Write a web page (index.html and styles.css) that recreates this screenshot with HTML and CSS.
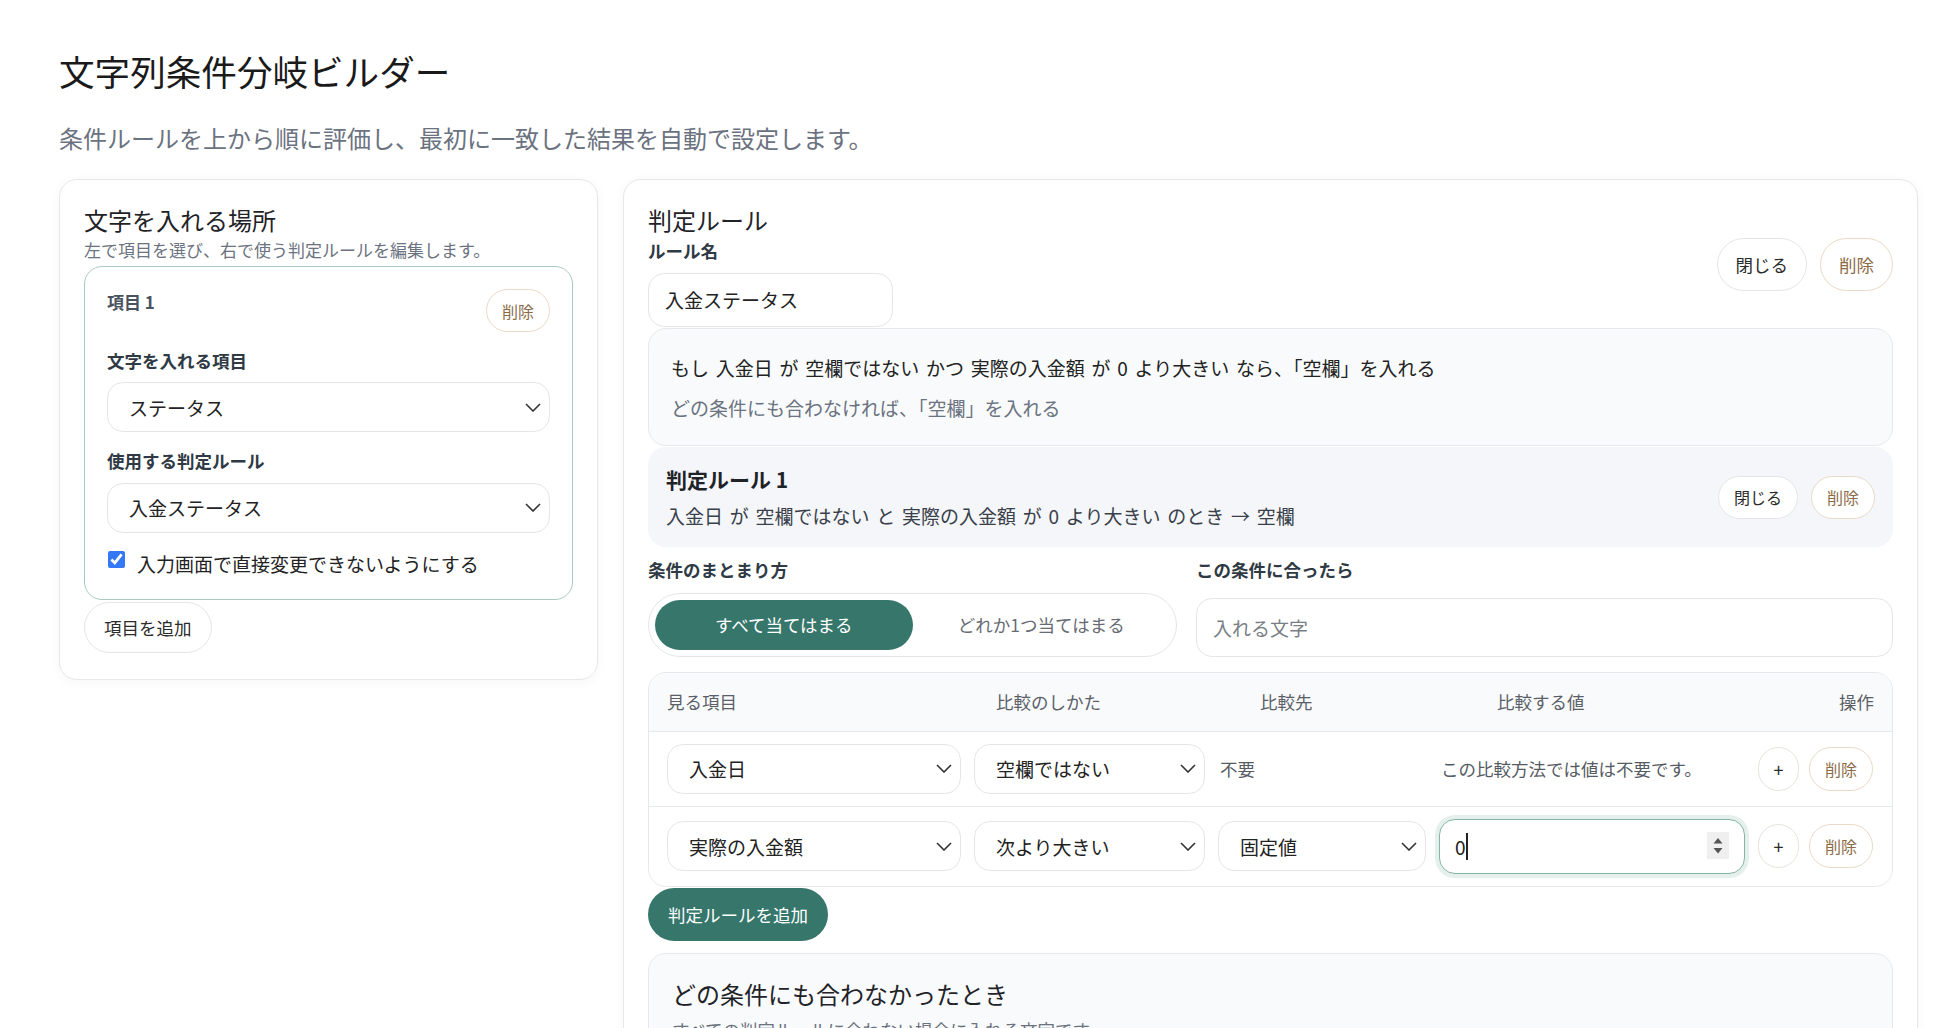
FILE: index.html
```html
<!DOCTYPE html>
<html lang="ja">
<head>
    <meta charset="UTF-8">
    <meta name="viewport" content="width=device-width, initial-scale=1.0">
    <title>文字列条件分岐ビルダー</title>
    <link rel="stylesheet" href="styles.css">
</head>
<body>
<div class="page">
    <h1>文字列条件分岐ビルダー</h1>
    <p class="lead">条件ルールを上から順に評価し、最初に一致した結果を自動で設定します。</p>

    <div class="layout">
        <!-- 左: 文字を入れる場所 -->
        <section class="card">
            <h2>文字を入れる場所</h2>
            <p class="hint">左で項目を選び、右で使う判定ルールを編集します。</p>

            <div class="target">
                <div class="target-head">
                    <span class="target-name">項目 1</span>
                    <button class="btn btn-sm btn-danger">削除</button>
                </div>
                <label class="field-label">文字を入れる項目</label>
                <select class="select">
                    <option>ステータス</option>
                </select>
                <label class="field-label">使用する判定ルール</label>
                <select class="select">
                    <option>入金ステータス</option>
                </select>
                <label class="check">
                    <input type="checkbox" checked>
                    <span>入力画面で直接変更できないようにする</span>
                </label>
            </div>
            <button class="btn btn-add">項目を追加</button>
        </section>

        <!-- 右: 判定ルール -->
        <section class="card">
            <div class="rule-head">
                <div>
                    <h2>判定ルール</h2>
                    <label class="field-label">ルール名</label>
                    <input class="text-input rule-name" type="text" value="入金ステータス">
                </div>
                <div class="actions">
                    <button class="btn btn-md">閉じる</button>
                    <button class="btn btn-md btn-danger">削除</button>
                </div>
            </div>

            <div class="summary">
                <p>もし 入金日 が 空欄ではない かつ 実際の入金額 が 0 より大きい なら、「空欄」を入れる</p>
                <p class="muted">どの条件にも合わなければ、「空欄」を入れる</p>
            </div>

            <div class="rule-block">
                <div>
                    <h3>判定ルール 1</h3>
                    <p>入金日 が 空欄ではない と 実際の入金額 が 0 より大きい のとき → 空欄</p>
                </div>
                <div class="actions">
                    <button class="btn btn-sm">閉じる</button>
                    <button class="btn btn-sm btn-danger">削除</button>
                </div>
            </div>

            <div class="rule-fields">
                <div>
                    <label class="field-label">条件のまとまり方</label>
                    <div class="seg">
                        <button class="seg-btn active">すべて当てはまる</button>
                        <button class="seg-btn">どれか1つ当てはまる</button>
                    </div>
                </div>
                <div>
                    <label class="field-label">この条件に合ったら</label>
                    <input class="text-input result-input" type="text" placeholder="入れる文字">
                </div>
            </div>

            <div class="cond-table">
                <div class="cond-head">
                    <span>見る項目</span>
                    <span>比較のしかた</span>
                    <span>比較先</span>
                    <span>比較する値</span>
                    <span>操作</span>
                </div>
                <div class="cond-row">
                    <select class="select"><option>入金日</option></select>
                    <select class="select"><option>空欄ではない</option></select>
                    <span class="cell-note">不要</span>
                    <span class="cell-note">この比較方法では値は不要です。</span>
                    <div class="row-actions">
                        <button class="btn btn-icon">+</button>
                        <button class="btn btn-row btn-danger">削除</button>
                    </div>
                </div>
                <div class="cond-row">
                    <select class="select"><option>実際の入金額</option></select>
                    <select class="select"><option>次より大きい</option></select>
                    <select class="select"><option>固定値</option></select>
                    <div class="num-field">
                        <input class="text-input num-input" type="text" value="0">
                        <span class="caret"></span>
                        <svg class="spin" viewBox="0 0 22 27"><rect width="22" height="27" fill="#efefef"/><path d="M11 6l4.5 5.5h-9z" fill="#555"/><path d="M11 21.5l4.5-5.5h-9z" fill="#555"/></svg>
                    </div>
                    <div class="row-actions">
                        <button class="btn btn-icon">+</button>
                        <button class="btn btn-row btn-danger">削除</button>
                    </div>
                </div>
            </div>

            <button class="btn btn-primary">判定ルールを追加</button>

            <div class="fallback">
                <h2>どの条件にも合わなかったとき</h2>
                <p class="hint">すべての判定ルールに合わない場合に入れる文字です。</p>
            </div>
        </section>
    </div>
</div>
</body>
</html>
```

FILE: styles.css
```css
/* General */
body {
    margin: 0;
    font-family: "Noto Sans CJK JP", "Noto Sans", sans-serif;
    background-color: #ffffff;
    color: #222;
}

.page {
    padding: 48px 26px 0 59px;
}

h1 {
    margin: 0;
    font-size: 35.6px;
    font-weight: 400;
    line-height: 1.3;
    color: #1a1a1a;
}

.lead {
    margin: 26px 0 0;
    font-size: 24px;
    line-height: 1.5;
    color: #6b7280;
}

.layout {
    display: grid;
    grid-template-columns: 539px 1fr;
    gap: 25px;
    align-items: start;
    margin-top: 23px;
}

/* Cards */
.card {
    background: #fff;
    border: 1px solid #e6e8eb;
    border-radius: 18px;
    padding: 22px 24px 26px;
    box-shadow: 0 2px 12px rgba(15, 23, 42, 0.04);
}

h2 {
    margin: 0;
    font-size: 24px;
    font-weight: 400;
    line-height: 1.5;
    color: #1f2328;
}

.hint {
    margin: 0;
    font-size: 17px;
    line-height: 1.4;
    color: #6b7280;
}

.field-label {
    display: block;
    margin: 16px 0 9px;
    font-size: 17.5px;
    font-weight: 700;
    line-height: 1.45;
    color: #2f3a45;
}

/* Buttons */
.btn {
    font-family: inherit;
    background: #fff;
    color: #2b2b2b;
    border: 1px solid #e3e5e8;
    border-radius: 999px;
    padding: 0;
    cursor: pointer;
}

.btn-danger {
    color: #8b6b47;
    border-color: #ead9c6;
}

.btn-sm {
    height: 43px;
    padding: 0 15px;
    font-size: 16px;
}

.btn-md {
    height: 53px;
    padding: 0 18px;
    font-size: 17.5px;
}

.btn-add {
    height: 51px;
    margin-top: 2px;
    padding: 0 19px;
    font-size: 17.5px;
}

.btn-primary {
    height: 53px;
    margin-top: 1px;
    padding: 0 20px;
    border: none;
    background: #36766b;
    color: #fff;
    font-size: 17.5px;
}

.btn-icon {
    width: 41px;
    height: 44px;
    font-size: 18px;
    border-color: #e6e2dc;
}

.btn-row {
    width: 64px;
    height: 44px;
    font-size: 16px;
}

.actions {
    display: flex;
    gap: 13px;
}

/* Inputs */
.select {
    display: block;
    width: 100%;
    height: 50px;
    -webkit-appearance: none;
    appearance: none;
    border: 1px solid #e3e6ea;
    border-radius: 16px;
    padding: 0 36px 0 21px;
    font-family: inherit;
    font-size: 19px;
    color: #222;
    background: #fff url("data:image/svg+xml,%3Csvg xmlns='http://www.w3.org/2000/svg' viewBox='0 0 16 9'%3E%3Cpath d='M1 1l7 7 7-7' fill='none' stroke='%23333' stroke-width='1.6'/%3E%3C/svg%3E") no-repeat right 8px center / 16px 9px;
}

.text-input {
    box-sizing: border-box;
    height: 54px;
    border: 1px solid #e3e6ea;
    border-radius: 16px;
    padding: 0 16px;
    font-family: inherit;
    font-size: 19px;
    color: #222;
    background: #fff;
    outline: none;
}

.text-input::placeholder {
    color: #7a7f87;
}

/* Left: target item */
.target {
    margin-top: 4px;
    border: 1px solid #a9cbbf;
    border-radius: 18px;
    padding: 22px 22px 21px;
}

.target-head {
    display: flex;
    justify-content: space-between;
    align-items: flex-start;
}

.target-name {
    font-size: 17px;
    font-weight: 700;
    line-height: 1.5;
    color: #4a5260;
}

.check {
    display: flex;
    align-items: flex-start;
    gap: 12px;
    margin-top: 17px;
    font-size: 19px;
    line-height: 1.5;
    color: #222;
}

.check input {
    width: 17px;
    height: 17px;
    margin: 1px 0 0 1px;
    accent-color: #3478f6;
}

/* Right: rule editor */
.rule-head {
    display: flex;
    justify-content: space-between;
    align-items: center;
}

.rule-head .field-label {
    margin: 0 0 9px;
}

.rule-name {
    width: 245px;
}

.summary {
    margin-top: 1px;
    background: #f8fafb;
    border: 1px solid #e6e9ec;
    border-radius: 18px;
    padding: 25px 22px 23px;
}

.summary p {
    margin: 0;
    font-size: 19px;
    line-height: 28px;
    word-spacing: 2.5px;
}

.summary .muted {
    margin-top: 12px;
    color: #6b7280;
}

.rule-block {
    display: flex;
    justify-content: space-between;
    align-items: center;
    margin-top: 1px;
    background: #f4f6f9;
    border-radius: 18px;
    padding: 17px 18px 16px;
}

.rule-block h3 {
    margin: 0;
    font-size: 21px;
    font-weight: 700;
    line-height: 1.45;
    color: #1f2328;
}

.rule-block p {
    margin: 8px 0 0;
    font-size: 19px;
    line-height: 1.5;
    word-spacing: 2.5px;
    color: #3a4049;
}

.rule-fields {
    display: grid;
    grid-template-columns: 529px 1fr;
    gap: 19px;
    margin-top: 10px;
}

.rule-fields .field-label {
    margin: 0 0 11px;
}

.seg {
    display: flex;
    height: 64px;
    box-sizing: border-box;
    border: 1px solid #e3e6ea;
    border-radius: 999px;
    padding: 6px;
}

.seg-btn {
    flex: 1;
    border: none;
    border-radius: 999px;
    background: transparent;
    font-family: inherit;
    font-size: 17.5px;
    color: #666b73;
}

.seg-btn.active {
    background: #36766b;
    color: #fff;
}

.result-input {
    display: block;
    width: 100%;
    height: 59px;
    margin-top: 16px;
}

/* Conditions table */
.cond-table {
    margin-top: 15px;
    border: 1px solid #e6e9ec;
    border-radius: 18px;
    overflow: hidden;
}

.cond-head {
    display: grid;
    grid-template-columns: 329px 264px 237px 1fr auto;
    align-items: center;
    height: 58px;
    padding: 0 18px;
    background: #f8fafb;
    border-bottom: 1px solid #e6e9ec;
    font-size: 17.5px;
    color: #5b6068;
}

.cond-row {
    display: grid;
    grid-template-columns: 294px 231px 208px 306px auto;
    gap: 13px;
    align-items: center;
    padding: 12px 18px;
}

.cond-row + .cond-row {
    border-top: 1px solid #e6e9ec;
}

.cell-note {
    padding-left: 2px;
    font-size: 17.5px;
    color: #555b63;
}

.row-actions {
    display: flex;
    gap: 10px;
}

.num-field {
    position: relative;
}

.num-input {
    display: block;
    width: 100%;
    height: 55px;
    padding-left: 15px;
    border-color: #86b5a8;
    box-shadow: 0 0 0 4px #e5f0ec;
}

.caret {
    position: absolute;
    left: 27px;
    top: 14px;
    width: 2px;
    height: 27px;
    background: #222;
}

.spin {
    position: absolute;
    right: 16px;
    top: 13px;
    width: 22px;
    height: 27px;
}

/* Fallback */
.fallback {
    margin-top: 12px;
    background: #f8fafb;
    border: 1px solid #e6e9ec;
    border-radius: 18px;
    padding: 22px 23px;
}

.fallback .hint {
    margin-top: 6px;
    font-size: 17.5px;
}
```
